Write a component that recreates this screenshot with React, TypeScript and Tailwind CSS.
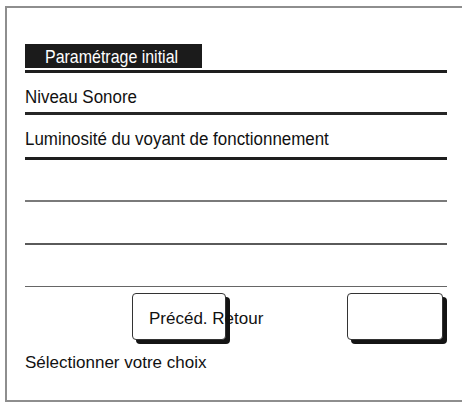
const font = { fontFamily: '"Liberation Sans", Arial, sans-serif' };

function Rule({ className }: { className: string }) {
  return <div className={`w-full ${className}`} />;
}

export default function App() {
  return (
    <div className="h-[403px] w-[462px] overflow-hidden bg-white" style={font}>
      <div className="ml-[5px] mt-[6px] h-[396px] w-[480px] border-b-2 border-l-2 border-t-2 border-[#8e8e8e]">
        <div className="ml-[18px] w-[422px] text-[17px] leading-[20px] text-[#111]">
          <div className="mt-[36px] flex h-[24px] w-[177px] items-center bg-[#1b1b1b] pl-[20px]">
            <span className="inline-block origin-left scale-x-[0.84] whitespace-nowrap pt-[1px] text-[19px] leading-[22px] text-white">
              Paramétrage initial
            </span>
          </div>
          <Rule className="mt-[2px] h-[3px] bg-[#1e1e1e]" />
          <div className="flex h-[39px] items-end pb-[5px]">
            <span className="inline-block origin-left scale-x-[0.94] whitespace-nowrap text-[18px]">Niveau Sonore</span>
          </div>
          <Rule className="h-[3px] bg-[#262626]" />
          <div className="flex h-[42px] items-end pb-[8px]">
            <span className="inline-block origin-left scale-x-[0.94] whitespace-nowrap text-[18px]">
              Luminosité du voyant de fonctionnement
            </span>
          </div>
          <Rule className="h-[3px] bg-[#1e1e1e]" />
          <div className="h-[40px]" />
          <Rule className="h-[2px] bg-[#7a7a7a]" />
          <div className="h-[41px]" />
          <Rule className="h-[2px] bg-[#5a5a5a]" />
          <div className="h-[41px]" />
          <Rule className="h-[1px] bg-[#666]" />
          <div className="mt-[6px] flex h-[47px]">
            <div className="ml-[107px] h-[47px] w-[94px] rounded-[4px] border border-[#333] bg-white pl-[16px] pt-[15px] shadow-[4px_4px_0_#141414]">
              <span className="whitespace-nowrap">Précéd. Retour</span>
            </div>
            <div className="ml-[121px] h-[47px] w-[96px] rounded-[4px] border border-[#333] bg-white shadow-[4px_4px_0_#141414]" />
          </div>
          <div className="mt-[13px]">Sélectionner votre choix</div>
        </div>
      </div>
    </div>
  );
}
